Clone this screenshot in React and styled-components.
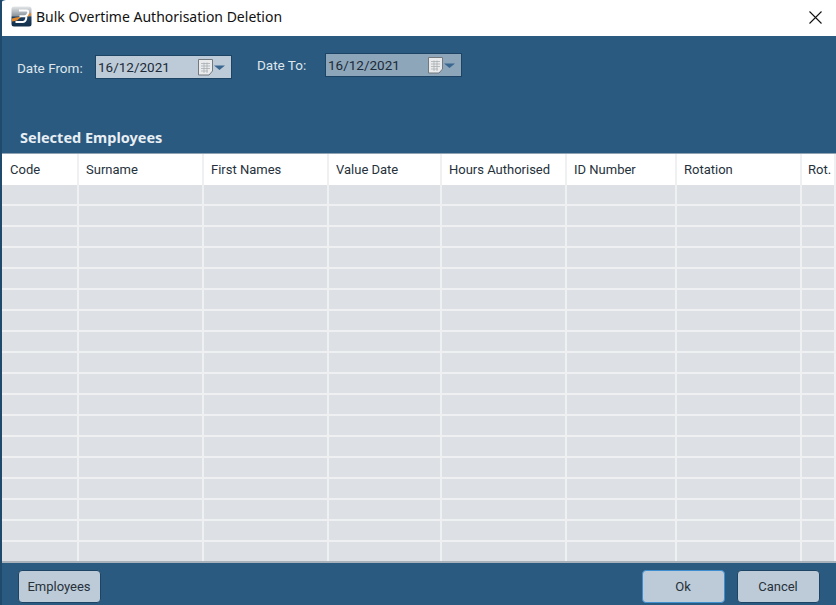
import React from 'react';
import styled, { createGlobalStyle } from 'styled-components';

const GlobalStyle = createGlobalStyle`
  html, body {
    margin: 0;
    padding: 0;
    background: #2a5a80;
  }
  * {
    box-sizing: border-box;
  }
`;

const Window = styled.div`
  width: 836px;
  height: 605px;
  display: flex;
  flex-direction: column;
  font-family: Roboto, "Liberation Sans", sans-serif;
  background: #2a5a80;
  border-left: 2px solid #1f4a6c;
  overflow: hidden;
`;

const TitleBar = styled.div`
  height: 36px;
  flex: none;
  display: flex;
  align-items: center;
  background: #fff;
  margin-left: -2px;
  padding: 0 12px 4px 11px;
  border-top-left-radius: 6px;
`;

const TitleText = styled.div`
  margin-left: 4px;
  flex: 1;
  font-family: "Noto Sans", sans-serif;
  font-size: 14px;
  color: #111;
`;

const CloseButton = styled.div`
  width: 13px;
  height: 13px;
  margin-right: 2px;
  margin-top: 3px;
  display: flex;
`;

const DateBar = styled.div`
  height: 77px;
  flex: none;
  display: flex;
  align-items: flex-start;
  padding-left: 15px;
`;

const DateGroup = styled.div`
  width: ${(p) => p.$width}px;
  display: flex;
  align-items: center;
  margin-top: ${(p) => p.$top}px;
`;

const DateLabel = styled.label`
  width: ${(p) => p.$width}px;
  padding-top: ${(p) => p.$drop || 0}px;
  font-size: 13.5px;
  color: #dfe6ec;
`;

const DateInput = styled.div`
  width: 137px;
  height: 24px;
  display: flex;
  align-items: center;
  padding: 0 6px 0 2px;
  background: ${(p) => (p.$disabled ? '#8ea6ba' : '#bdcbd8')};
  border: 1px solid #1d4464;
  font-size: 13.5px;
  color: #1c2a38;
`;

const DateValue = styled.span`
  flex: 1;
`;

const Heading = styled.div`
  height: 40px;
  flex: none;
  padding: 14px 0 0 18px;
  font-family: "Noto Sans", sans-serif;
  font-size: 14.5px;
  font-weight: 700;
  line-height: 20px;
  color: #e8eef3;
`;

const Grid = styled.div`
  height: 410px;
  flex: none;
  background: #dde1e5;
  border-top: 1px solid #8fa3b4;
  border-bottom: 2px solid #a9b2ba;
  overflow: hidden;
`;

const HeaderRow = styled.div`
  height: 31px;
  display: flex;
  background: #fff;
`;

const HeaderCell = styled.div`
  width: ${(p) => p.$width}px;
  flex: none;
  padding: 8px 0 0 ${(p) => p.$pad}px;
  border-right: 2px solid #eef0f2;
  font-size: 13px;
  color: #26313b;
  white-space: nowrap;
`;

const Row = styled.div`
  height: 21px;
  display: flex;
  border-bottom: 2px solid #eef0f2;
`;

const Cell = styled.div`
  width: ${(p) => p.$width}px;
  flex: none;
  border-right: 2px solid #eef0f2;
`;

const Footer = styled.div`
  flex: 1;
  display: flex;
  align-items: flex-start;
  gap: 12px;
  padding: 7px 16px 0 16px;
`;

const Button = styled.button`
  width: ${(p) => p.$width}px;
  height: 33px;
  margin-right: ${(p) => p.$after || 0}px;
  background: #bdcbd8;
  border: 1px solid ${(p) => (p.$active ? '#3f8fd0' : '#1d4464')};
  border-radius: 4px;
  font-family: Roboto, "Liberation Sans", sans-serif;
  font-size: 13px;
  color: #26313b;
  padding: 0 1px 0 0;
`;

const columns = [
  { name: 'Code', width: 77, pad: 8 },
  { name: 'Surname', width: 125, pad: 7 },
  { name: 'First Names', width: 125, pad: 7 },
  { name: 'Value Date', width: 113, pad: 7 },
  { name: 'Hours Authorised', width: 125, pad: 7 },
  { name: 'ID Number', width: 110, pad: 7 },
  { name: 'Rotation', width: 125, pad: 7 },
  { name: 'Rot.', width: 34, pad: 6 },
];

const rows = Array.from({ length: 18 }, (_, i) => i);

const AppLogo = () => (
  <svg width="21" height="21" viewBox="0 0 21 21">
    <defs>
      <linearGradient id="logoBg" x1="0" y1="0" x2="0" y2="1">
        <stop offset="0" stopColor="#e4e7e9" />
        <stop offset="0.48" stopColor="#8b949b" />
        <stop offset="0.52" stopColor="#1f3f5f" />
        <stop offset="1" stopColor="#12304c" />
      </linearGradient>
    </defs>
    <rect x="0.5" y="0.5" width="20" height="20" rx="2.5" fill="url(#logoBg)" />
    <path d="M1 12.5 Q6 10.5 10 11 L6 14.5 L1 15.5 Z" fill="#e58a2c" />
    <path d="M20 7 L20 9.5 L15 11 L16 8.5 Z" fill="#e58a2c" />
    <path
      d="M8 4.5 H15.5 Q17.6 4.5 17 7 L16.7 8 Q16.2 10.2 13.5 10.2 H8.5 M13.5 10.2 Q15.8 10.2 15.2 12.5 L14.9 13.6 Q14.3 16 11.8 16 H4.5"
      fill="none"
      stroke="#fff"
      strokeWidth="2"
    />
  </svg>
);

const CloseIcon = () => (
  <svg width="13" height="13" viewBox="0 0 13 13">
    <path d="M0.5 0.5 L12.5 12.5 M12.5 0.5 L0.5 12.5" stroke="#111" strokeWidth="1.1" fill="none" />
  </svg>
);

const CalendarIcon = () => (
  <svg width="28" height="17" viewBox="0 0 28 17">
    <path d="M1.5 0.5 H15.5 V12 L12 16 H1.5 Z" fill="#e9ebec" stroke="#74797e" />
    <path d="M4 4.5 H13 M4 7 H13 M4 9.5 H13 M4 12 H11 M7 3.5 V14 M10 3.5 V14" stroke="#a9aeb3" strokeWidth="0.8" />
    <path d="M17 6.5 H28 L22.5 11 Z" fill="#3a6790" />
  </svg>
);

const DateField = ({ value, disabled }) => (
  <DateInput $disabled={disabled}>
    <DateValue>{value}</DateValue>
    <CalendarIcon />
  </DateInput>
);

export default function App() {
  return (
    <>
      <GlobalStyle />
      <Window>
        <TitleBar>
          <AppLogo />
          <TitleText>Bulk Overtime Authorisation Deletion</TitleText>
          <CloseButton>
            <CloseIcon />
          </CloseButton>
        </TitleBar>
        <DateBar>
          <DateGroup $width={240} $top={19}>
            <DateLabel $width={78} $drop={2}>Date From:</DateLabel>
            <DateField value="16/12/2021" />
          </DateGroup>
          <DateGroup $width={205} $top={17}>
            <DateLabel $width={68}>Date To:</DateLabel>
            <DateField value="16/12/2021" disabled />
          </DateGroup>
        </DateBar>
        <Heading>Selected Employees</Heading>
        <Grid>
          <HeaderRow>
            {columns.map((c) => (
              <HeaderCell key={c.name} $width={c.width} $pad={c.pad}>
                {c.name}
              </HeaderCell>
            ))}
          </HeaderRow>
          {rows.map((r) => (
            <Row key={r}>
              {columns.map((c) => (
                <Cell key={c.name} $width={c.width} />
              ))}
            </Row>
          ))}
        </Grid>
        <Footer>
          <Button $width={83} $after={529}>Employees</Button>
          <Button $width={83} $active>Ok</Button>
          <Button $width={83}>Cancel</Button>
        </Footer>
      </Window>
    </>
  );
}
